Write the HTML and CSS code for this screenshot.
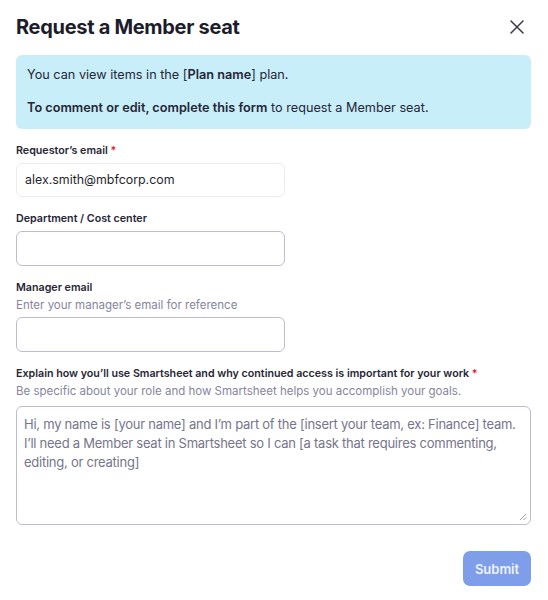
FILE: index.html
```html
<!DOCTYPE html>
<html>
<head>
<meta charset="utf-8">
<link rel="stylesheet" href="styles.css">
</head>
<body>
<div class="dialog">
  <div class="header">
    <h1 class="title">Request a Member seat</h1>
    <button class="close" aria-label="Close">
      <svg width="14" height="14" viewBox="0 0 14 14"><path d="M1 1L13 13M13 1L1 13" stroke="#3a3a4a" stroke-width="1.5" stroke-linecap="round"/></svg>
    </button>
  </div>
  <div class="banner">
    <p>You can view items in the [<b>Plan name</b>] plan.</p>
    <p><b>To comment or edit, complete this form</b> to request a Member seat.</p>
  </div>
  <div class="field">
    <label class="label">Requestor’s email <span class="req">*</span></label>
    <div class="input readonly">alex.smith@mbfcorp.com</div>
  </div>
  <div class="field">
    <label class="label">Department / Cost center</label>
    <div class="input"></div>
  </div>
  <div class="field">
    <label class="label">Manager email</label>
    <div class="help">Enter your manager’s email for reference</div>
    <div class="input"></div>
  </div>
  <div class="field">
    <label class="label">Explain how you’ll use Smartsheet and why continued access is important for your work <span class="req">*</span></label>
    <div class="help">Be specific about your role and how Smartsheet helps you accomplish your goals.</div>
    <div class="textarea">Hi, my name is [your name] and I’m part of the [insert your team, ex: Finance] team. I’ll need a Member seat in Smartsheet so I can [a task that requires commenting, editing, or creating]
      <svg class="grip" width="8" height="8" viewBox="0 0 8 8"><path d="M7 1L1 7M7 4.5L4.5 7" stroke="#9a9ab0" stroke-width="1"/></svg>
    </div>
  </div>
  <div class="footer">
    <button class="submit">Submit</button>
  </div>
</div>
</body>
</html>
```
FILE: styles.css
```css
* { box-sizing: border-box; }
html, body { margin: 0; padding: 0; background: #fff; }
body { font-family: Inter, "Noto Sans", sans-serif; color: #1f1f2e; }
.dialog { width: 548px; padding: 14px 17px 0 16px; display: flex; flex-direction: column; }
.header { display: flex; align-items: center; justify-content: space-between; height: 26px; }
.title { margin: 0; font-size: 20px; font-weight: 700; letter-spacing: -0.3px; color: #1c1c2b; line-height: 26px; }
.close { border: 0; background: none; padding: 0; width: 14px; height: 14px; margin-right: 7px; display: flex; }
.banner { margin-top: 15px; background: #c8eefa; border-radius: 6px; padding: 10px 11px 11px; font-size: 12.7px; line-height: 20px; color: #262636; }
.banner p { margin: 0; }
.banner p + p { margin-top: 13px; }
.banner b { font-weight: 600; }
.field { display: flex; flex-direction: column; margin-top: 14px; }
.label { font-size: 10.7px; font-weight: 600; line-height: 16px; color: #262636; }
.req { color: #d8202c; }
.help { font-size: 11.5px; line-height: 16px; color: #8585a0; margin-top: 1px; }
.input { margin-top: 4px; width: 269px; height: 35px; border: 1.5px solid #bcbcd4; border-radius: 6px; background: #fff; font-size: 12.4px; line-height: 32px; padding: 0 8px; color: #1f1f2e; }
.input.readonly { height: 34px; border: 1px solid #ececf2; }
.textarea { position: relative; margin-top: 7px; width: 515px; height: 119px; border: 1.5px solid #bcbcd4; border-radius: 6px; padding: 8px 4px 8px 7px; font-size: 13px; letter-spacing: -0.25px; line-height: 19px; color: #75758c; }
.grip { position: absolute; right: 3px; bottom: 3px; }
.footer { display: flex; justify-content: flex-end; margin-top: 26px; }
.submit { width: 68px; height: 35px; border: 0; border-radius: 7px; background: #7e9ee9; color: #eef2fd; font-family: Inter, sans-serif; font-size: 13px; font-weight: 600; }
```
